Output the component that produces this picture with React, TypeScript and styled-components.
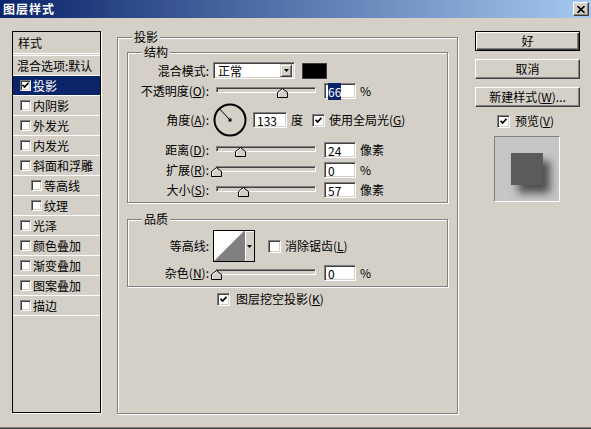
import React from "react";
import styled, { createGlobalStyle } from "styled-components";

const GlobalStyle = createGlobalStyle`
  html, body {
    margin: 0;
    padding: 0;
    background: #d4d0c8;
  }
  body {
    font-family: "Noto Sans CJK SC", "Liberation Sans", sans-serif;
    font-size: 12px;
    line-height: 14px;
    color: #000;
  }
  * {
    box-sizing: border-box;
  }
`;

const Window = styled.div`
  width: 591px;
  height: 429px;
  display: flex;
  flex-direction: column;
  background: #d4d0c8;
  border-bottom: 1px solid #404040;
  box-shadow: inset 0 -1px 0 #808080;
  overflow: hidden;
`;

const TitleBar = styled.div`
  height: 18px;
  flex-shrink: 0;
  display: flex;
  align-items: center;
  justify-content: space-between;
  padding: 0 2px 0 3px;
  background: linear-gradient(to right, #0a246a, #a6caf0);
`;

const Title = styled.span`
  color: #fff;
  font-weight: bold;
  letter-spacing: 1px;
`;

const CloseButton = styled.div`
  width: 16px;
  height: 14px;
  display: flex;
  align-items: center;
  justify-content: center;
  background: #d4d0c8;
  border: 1px solid;
  border-color: #fff #404040 #404040 #fff;
  box-shadow: inset -1px -1px 0 #808080;
`;

const Body = styled.div`
  flex: 1;
  display: flex;
  align-items: flex-start;
  padding: 13px 12px 0 12px;
`;

/* ---------- style list ---------- */

const StyleList = styled.div`
  width: 89px;
  height: 382px;
  flex-shrink: 0;
  border: 1px solid #000;
  box-shadow: 1px 1px 0 #fff;
  display: flex;
  flex-direction: column;
`;

const ListHeader = styled.div`
  height: 24px;
  display: flex;
  align-items: center;
  padding-left: 5px;
  border-bottom: 3px double #fff;
`;

const ListItem = styled.div<{ $indent: number; $selected?: boolean }>`
  height: 20px;
  display: flex;
  align-items: center;
  gap: 2px;
  padding-left: ${(p) => p.$indent}px;
  border-bottom: 1px solid #fff;
  white-space: nowrap;
  background: ${(p) => (p.$selected ? "#0a246a" : "transparent")};
  color: ${(p) => (p.$selected ? "#fff" : "#000")};
`;

/* ---------- groups ---------- */

const Group = styled.fieldset<{ $w: number; $h?: number; $mt?: number }>`
  margin: ${(p) => p.$mt ?? 0}px 0 0 0;
  padding: 0;
  min-inline-size: 0;
  width: ${(p) => p.$w}px;
  ${(p) => (p.$h ? `height: ${p.$h}px;` : "")}
  flex-shrink: 0;
  border: 1px solid #808080;
  box-shadow: inset 1px 1px 0 #fff, 1px 1px 0 #fff;
`;

const Legend = styled.legend`
  margin-left: 14px;
  padding: 0 2px;
  height: 14px;
  line-height: 14px;
  background: #d4d0c8;
`;

const MainGroup = styled(Group)`
  margin: -1px 17px 0 16px;
`;

const GroupContent = styled.div<{ $pt: number; $pb: number; $px?: number }>`
  display: flex;
  flex-direction: column;
  padding: ${(p) => p.$pt}px ${(p) => p.$px ?? 0}px ${(p) => p.$pb}px;
`;

const Row = styled.div<{ $h: number; $mt?: number }>`
  display: flex;
  align-items: center;
  height: ${(p) => p.$h}px;
  margin-top: ${(p) => p.$mt ?? 0}px;
  white-space: nowrap;
`;

const Label = styled.div`
  width: 81px;
  flex-shrink: 0;
  text-align: right;
`;

const Text = styled.span<{ $ml?: number }>`
  margin-left: ${(p) => p.$ml ?? 0}px;
`;

const Sunken = styled.div`
  border: 1px solid;
  border-color: #808080 #fff #fff #808080;
  box-shadow: inset 1px 1px 0 #404040, inset -1px -1px 0 #d4d0c8;
  background: #fff;
`;

const Field = styled(Sunken)<{ $w: number; $ml: number }>`
  width: ${(p) => p.$w}px;
  height: 16px;
  margin-left: ${(p) => p.$ml}px;
  flex-shrink: 0;
  padding: 1px 0 0 3px;
  line-height: 13px;
`;

const Selected = styled.span`
  background: #0a246a;
  color: #fff;
`;

const Select = styled(Sunken)`
  width: 82px;
  height: 17px;
  margin-left: 4px;
  padding: 2px;
  display: flex;
  align-items: center;
  justify-content: space-between;
`;

const SelectText = styled.span`
  padding-left: 2px;
`;

const ArrowButton = styled.div`
  width: 12px;
  height: 13px;
  display: flex;
  align-items: center;
  justify-content: center;
  background: #d4d0c8;
  border: 1px solid;
  border-color: #d4d0c8 #404040 #404040 #d4d0c8;
  box-shadow: inset 1px 1px 0 #fff, inset -1px -1px 0 #808080;
`;

const Swatch = styled.div`
  width: 25px;
  height: 16px;
  margin-left: 7px;
  background: #000;
  border: 1px solid #404040;
`;

const SliderBox = styled.div`
  position: relative;
  width: 109px;
  height: 16px;
  margin-left: 2px;
  flex-shrink: 0;
`;

const Track = styled.div`
  margin: 4px 4px 0 5px;
  height: 6px;
  border: 1px solid;
  border-color: #808080 #fff #fff #808080;
  box-shadow: inset 1px 1px 0 #404040;
  background: #d4d0c8;
`;

const Thumb = styled.svg`
  position: absolute;
  top: 5px;
`;

const Box = styled.div<{ $size: number; $ml?: number }>`
  width: ${(p) => p.$size}px;
  height: ${(p) => p.$size}px;
  margin-left: ${(p) => p.$ml ?? 0}px;
  flex-shrink: 0;
  display: flex;
  align-items: center;
  justify-content: center;
  background: #fff;
  border: 1px solid;
  border-color: #808080 #fff #fff #808080;
  box-shadow: inset 1px 1px 0 #404040, inset -1px -1px 0 #d4d0c8;
`;

const Dial = styled.svg`
  margin-left: 4px;
  flex-shrink: 0;
`;

const ContourBox = styled.div`
  width: 42px;
  height: 32px;
  margin-left: 4px;
  display: flex;
  border: 1px solid #000;
  background: #fff;
`;

const ContourArrow = styled.div`
  flex: 1;
  display: flex;
  align-items: center;
  justify-content: center;
  background: #d4d0c8;
  border-left: 1px solid #808080;
  box-shadow: inset 1px 1px 0 #fff;
`;

/* ---------- right column ---------- */

const Side = styled.div`
  width: 105px;
  flex-shrink: 0;
  display: flex;
  flex-direction: column;
  gap: 8px;
`;

const Button = styled.div<{ $default?: boolean }>`
  height: 20px;
  display: flex;
  align-items: center;
  justify-content: center;
  background: #d4d0c8;
  border: 1px solid;
  border-color: ${(p) => (p.$default ? "#000" : "#fff #404040 #404040 #fff")};
  box-shadow: ${(p) =>
    p.$default
      ? "inset 1px 1px 0 #fff, inset -1px -1px 0 #404040, inset -2px -2px 0 #808080"
      : "inset -1px -1px 0 #808080"};
`;

const PreviewRow = styled.div`
  display: flex;
  align-items: center;
  height: 14px;
  margin-top: -1px;
  padding-left: 22px;
`;

const PreviewBox = styled.div`
  width: 66px;
  height: 66px;
  margin: 0 0 0 19px;
  padding: 16px;
  border: 1px solid;
  border-color: #808080 #fff #fff #808080;
  background-color: #cdcdcd;
  background-image: radial-gradient(#bdbdbd 0.6px, transparent 0.8px);
  background-size: 2px 2px;
`;

const PreviewSquare = styled.div`
  width: 32px;
  height: 32px;
  background: #5b5b5b;
  box-shadow: 7px 8px 8px rgba(0, 0, 0, 0.6);
`;

/* ---------- pieces ---------- */

function Check({ on, size = 13, ml = 0 }: { on?: boolean; size?: number; ml?: number }) {
  return (
    <Box $size={size} $ml={ml}>
      {on && (
        <svg width="7" height="7" viewBox="0 0 7 7">
          <path d="M0.5 2.8 L2.6 5 L6.5 0.8" fill="none" stroke="#000" strokeWidth="1.8" />
        </svg>
      )}
    </Box>
  );
}

function Slider({ value }: { value: number }) {
  return (
    <SliderBox>
      <Track />
      <Thumb width="11" height="10" viewBox="0 0 11 10" style={{ left: value * 100 }}>
        <path d="M5.5 0.5 L10.5 4.5 L10.5 9.5 L0.5 9.5 L0.5 4.5 Z" fill="#d4d0c8" stroke="#000" />
        <path d="M1.5 9 L1.5 5 L5.5 1.8" fill="none" stroke="#fff" />
      </Thumb>
    </SliderBox>
  );
}

function DownArrow() {
  return (
    <svg width="5" height="3" viewBox="0 0 5 3">
      <path d="M0 0 H5 L2.5 3 Z" fill="#000" />
    </svg>
  );
}

const items: { name: string; indent: number }[] = [
  { name: "内阴影", indent: 7 },
  { name: "外发光", indent: 7 },
  { name: "内发光", indent: 7 },
  { name: "斜面和浮雕", indent: 7 },
  { name: "等高线", indent: 18 },
  { name: "纹理", indent: 18 },
  { name: "光泽", indent: 7 },
  { name: "颜色叠加", indent: 7 },
  { name: "渐变叠加", indent: 7 },
  { name: "图案叠加", indent: 7 },
  { name: "描边", indent: 7 },
];

export default function App() {
  const angle = (133 * Math.PI) / 180;
  const lx = 17 + Math.cos(angle) * 15;
  const ly = 17 - Math.sin(angle) * 15;

  return (
    <>
      <GlobalStyle />
      <Window>
        <TitleBar>
          <Title>图层样式</Title>
          <CloseButton>
            <svg width="8" height="7" viewBox="0 0 8 7">
              <path d="M0.5 0 L7.5 7 M7.5 0 L0.5 7" stroke="#000" strokeWidth="1.6" />
            </svg>
          </CloseButton>
        </TitleBar>

        <Body>
          <StyleList>
            <ListHeader>样式</ListHeader>
            <ListItem $indent={4}>混合选项:默认</ListItem>
            <ListItem $indent={7} $selected>
              <Check on size={11} />
              投影
            </ListItem>
            {items.map((it) => (
              <ListItem key={it.name} $indent={it.indent}>
                <Check size={11} />
                {it.name}
              </ListItem>
            ))}
          </StyleList>

          <MainGroup $w={341} $h={384}>
            <Legend>投影</Legend>
            <GroupContent $pt={1} $pb={0} $px={9}>
              <Group $w={321}>
                <Legend>结构</Legend>
                <GroupContent $pt={3} $pb={4}>
                  <Row $h={17}>
                    <Label>混合模式:</Label>
                    <Select>
                      <SelectText>正常</SelectText>
                      <ArrowButton>
                        <DownArrow />
                      </ArrowButton>
                    </Select>
                    <Swatch />
                  </Row>
                  <Row $h={16} $mt={4}>
                    <Label>
                      不透明度(<u>O</u>):
                    </Label>
                    <Slider value={0.66} />
                    <Field $w={32} $ml={4}>
                      <Selected>66</Selected>
                    </Field>
                    <Text $ml={4}>%</Text>
                  </Row>
                  <Row $h={34} $mt={4}>
                    <Label>
                      角度(<u>A</u>):
                    </Label>
                    <Dial width="34" height="34" viewBox="0 0 34 34">
                      <circle cx="17" cy="17" r="15.5" fill="none" stroke="#000" strokeWidth="2" />
                      <line x1="17" y1="17" x2={lx} y2={ly} stroke="#000" strokeWidth="1" />
                      <rect x="15.5" y="15.5" width="3" height="3" fill="#000" />
                    </Dial>
                    <Field $w={34} $ml={6}>
                      133
                    </Field>
                    <Text $ml={4}>度</Text>
                    <Check on ml={9} />
                    <Text $ml={4}>
                      使用全局光(<u>G</u>)
                    </Text>
                  </Row>
                  <Row $h={16} $mt={5}>
                    <Label>
                      距离(<u>D</u>):
                    </Label>
                    <Slider value={0.24} />
                    <Field $w={32} $ml={4}>
                      24
                    </Field>
                    <Text $ml={4}>像素</Text>
                  </Row>
                  <Row $h={16} $mt={4}>
                    <Label>
                      扩展(<u>R</u>):
                    </Label>
                    <Slider value={0} />
                    <Field $w={32} $ml={4}>
                      0
                    </Field>
                    <Text $ml={4}>%</Text>
                  </Row>
                  <Row $h={16} $mt={4}>
                    <Label>
                      大小(<u>S</u>):
                    </Label>
                    <Slider value={0.27} />
                    <Field $w={32} $ml={4}>
                      57
                    </Field>
                    <Text $ml={4}>像素</Text>
                  </Row>
                </GroupContent>
              </Group>

              <Group $w={321} $mt={9}>
                <Legend>品质</Legend>
                <GroupContent $pt={4} $pb={5}>
                  <Row $h={32}>
                    <Label>等高线:</Label>
                    <ContourBox>
                      <svg width="30" height="30" viewBox="0 0 30 30">
                        <path d="M0 30 L30 0 L30 30 Z" fill="#808080" />
                      </svg>
                      <ContourArrow>
                        <DownArrow />
                      </ContourArrow>
                    </ContourBox>
                    <Check ml={13} />
                    <Text $ml={4}>
                      消除锯齿(<u>L</u>)
                    </Text>
                  </Row>
                  <Row $h={16} $mt={3}>
                    <Label>
                      杂色(<u>N</u>):
                    </Label>
                    <Slider value={0} />
                    <Field $w={32} $ml={4}>
                      0
                    </Field>
                    <Text $ml={4}>%</Text>
                  </Row>
                </GroupContent>
              </Group>

              <Row $h={14} $mt={5}>
                <Check on ml={90} />
                <Text $ml={6}>
                  图层挖空投影(<u>K</u>)
                </Text>
              </Row>
            </GroupContent>
          </MainGroup>

          <Side>
            <Button $default>好</Button>
            <Button>取消</Button>
            <Button>
              新建样式(<u>W</u>)...
            </Button>
            <PreviewRow>
              <Check on />
              <Text $ml={5}>
                预览(<u>V</u>)
              </Text>
            </PreviewRow>
            <PreviewBox>
              <PreviewSquare />
            </PreviewBox>
          </Side>
        </Body>
      </Window>
    </>
  );
}
